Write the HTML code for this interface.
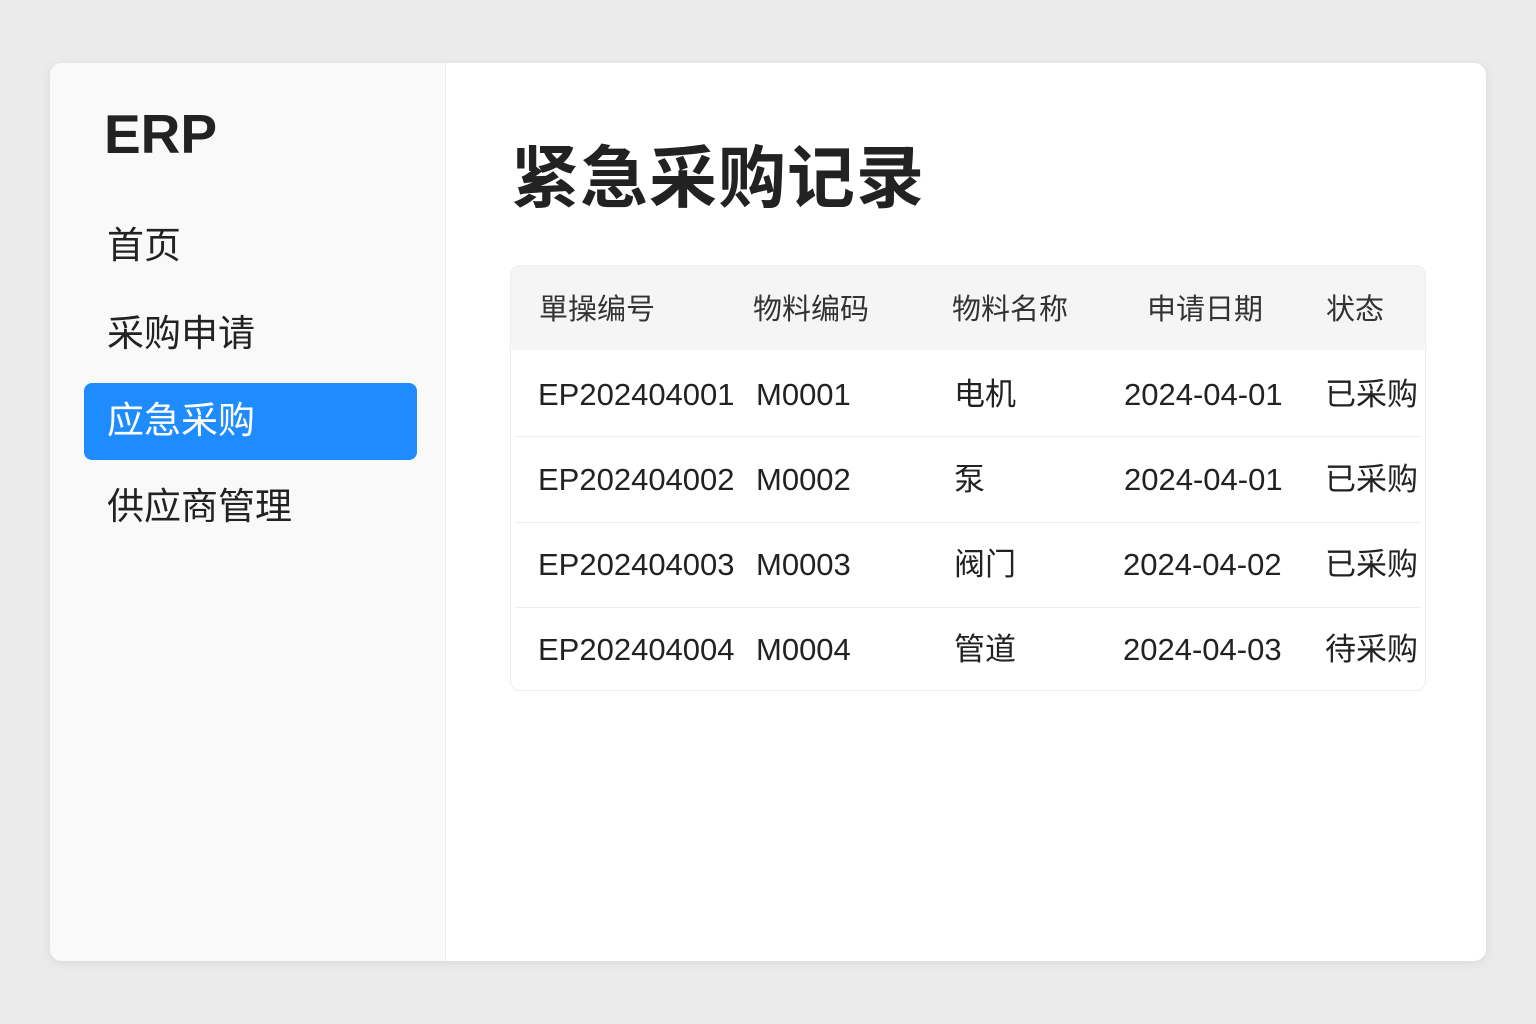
<!DOCTYPE html>
<html><head><meta charset="utf-8"><style>
*{margin:0;padding:0;box-sizing:border-box}
body{width:1536px;height:1024px;background:#ebebeb;font-family:"Liberation Sans","Noto Sans CJK SC",sans-serif;color:#222;position:relative;overflow:hidden}
.card{position:absolute;left:50px;top:63px;width:1436px;height:898px;background:#fff;border-radius:12px;box-shadow:0 2px 10px rgba(0,0,0,.08);overflow:hidden}
.side{position:absolute;left:0;top:0;width:396px;height:100%;background:#f9f9f9;border-right:1px solid #ececec}
.a{position:absolute;white-space:nowrap}
.erp{left:54px;top:39px;font-size:55px;font-weight:bold;color:#222}
.nav{left:57px;font-size:37px;color:#222;line-height:42px}
.act{position:absolute;left:34px;top:320px;width:333px;height:77px;background:#1e8cff;border-radius:8px}
.title{left:461px;top:60px;font-size:68px;font-weight:bold;color:#222;letter-spacing:1px}
.tbl{position:absolute;left:460px;top:202px;width:916px;height:426px;border:1px solid #eee;border-radius:10px;overflow:hidden;background:#fff}
.hd{position:absolute;left:0;top:0;width:100%;height:84px;background:#f5f5f5}
.ln{position:absolute;left:4px;right:4px;height:1px;background:#ececec}
.c{position:absolute;white-space:nowrap;font-size:31px;line-height:36px;color:#222}
.h{font-size:29px;color:#333}
</style></head><body>
<div class="card">
<div class="side">
<div class="a erp">ERP</div>
<div class="a nav" style="top:162px">首页</div>
<div class="a nav" style="top:250px">采购申请</div>
<div class="act"></div>
<div class="a nav" style="top:337px;color:#fff">应急采购</div>
<div class="a nav" style="top:423px">供应商管理</div>
</div>
<div class="a title">紧急采购记录</div>
<div class="tbl">
<div class="hd"></div>
<div class="ln" style="top:170px"></div>
<div class="ln" style="top:256px"></div>
<div class="ln" style="top:341px"></div>
<div class="c h" style="left:28px;top:26px">單操编号</div>
<div class="c h" style="left:242px;top:26px">物料编码</div>
<div class="c h" style="left:441px;top:26px">物料名称</div>
<div class="c h" style="left:636px;top:26px">申请日期</div>
<div class="c h" style="left:815px;top:26px">状态</div>

<div class="c" style="left:27px;top:111px">EP202404001</div>
<div class="c" style="left:245px;top:111px">M0001</div>
<div class="c" style="left:443px;top:111px">电机</div>
<div class="c" style="left:613px;top:111px">2024-04-01</div>
<div class="c" style="left:814px;top:111px">已采购</div>

<div class="c" style="left:27px;top:196px">EP202404002</div>
<div class="c" style="left:245px;top:196px">M0002</div>
<div class="c" style="left:443px;top:196px">泵</div>
<div class="c" style="left:613px;top:196px">2024-04-01</div>
<div class="c" style="left:814px;top:196px">已采购</div>

<div class="c" style="left:27px;top:281px">EP202404003</div>
<div class="c" style="left:245px;top:281px">M0003</div>
<div class="c" style="left:443px;top:281px">阀门</div>
<div class="c" style="left:612px;top:281px">2024-04-02</div>
<div class="c" style="left:814px;top:281px">已采购</div>

<div class="c" style="left:27px;top:366px">EP202404004</div>
<div class="c" style="left:245px;top:366px">M0004</div>
<div class="c" style="left:443px;top:366px">管道</div>
<div class="c" style="left:612px;top:366px">2024-04-03</div>
<div class="c" style="left:814px;top:366px">待采购</div>
</div>
</div>
</body></html>
